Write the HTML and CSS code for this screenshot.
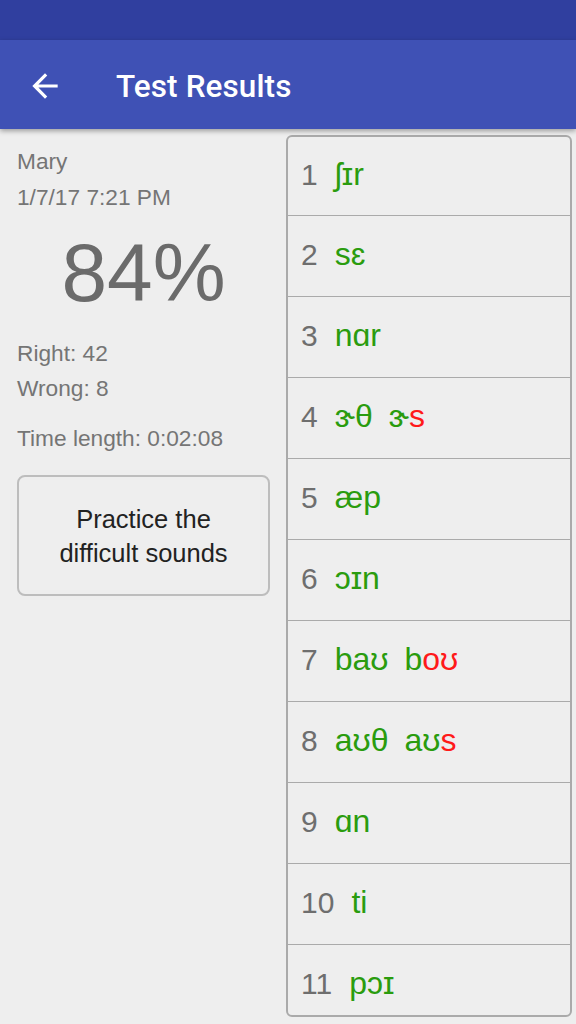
FILE: index.html
```
<!DOCTYPE html>
<html>
<head>
<meta charset="utf-8">
<link rel="stylesheet" href="styles.css">
</head>
<body>
<div class="statusbar"></div>
<header class="toolbar">
  <svg class="back" viewBox="0 0 24 24" width="38" height="38"><path fill="#fff" d="M20 11H7.83l5.59-5.59L12 4l-8 8 8 8 1.41-1.41L7.83 13H20v-2z"/></svg>
  <h1 class="title">Test Results</h1>
</header>
<main class="content">
  <section class="summary">
    <div class="info">Mary</div>
    <div class="info">1/7/17 7:21 PM</div>
    <div class="score">84%</div>
    <div class="stat first">Right: 42</div>
    <div class="stat">Wrong: 8</div>
    <div class="stat time">Time length: 0:02:08</div>
    <button class="practice">Practice the<br>difficult sounds</button>
  </section>
  <section class="list">
    <div class="row"><span class="num">1</span><span class="ipa"><span class="ok">ʃɪr</span></span></div>
    <div class="row"><span class="num">2</span><span class="ipa"><span class="ok">sɛ</span></span></div>
    <div class="row"><span class="num">3</span><span class="ipa"><span class="ok">nɑr</span></span></div>
    <div class="row"><span class="num">4</span><span class="ipa"><span class="ok">ɝθ</span><span><span class="ok">ɝ</span><span class="bad">s</span></span></span></div>
    <div class="row"><span class="num">5</span><span class="ipa"><span class="ok">æp</span></span></div>
    <div class="row"><span class="num">6</span><span class="ipa"><span class="ok">ɔɪn</span></span></div>
    <div class="row"><span class="num">7</span><span class="ipa"><span class="ok">baʊ</span><span><span class="ok">b</span><span class="bad">oʊ</span></span></span></div>
    <div class="row"><span class="num">8</span><span class="ipa"><span class="ok">aʊθ</span><span><span class="ok">aʊ</span><span class="bad">s</span></span></span></div>
    <div class="row"><span class="num">9</span><span class="ipa"><span class="ok">ɑn</span></span></div>
    <div class="row"><span class="num">10</span><span class="ipa"><span class="ok">ti</span></span></div>
    <div class="row"><span class="num">11</span><span class="ipa"><span class="ok">pɔɪ</span></span></div>
  </section>
</main>
</body>
</html>
```
FILE: styles.css
```
* { box-sizing: border-box; }
html, body {
  margin: 0;
  padding: 0;
  background: #eeeeee;
  font-family: "Liberation Sans", Arial, sans-serif;
  width: 576px;
  height: 1024px;
  overflow: hidden;
}
.statusbar {
  height: 40px;
  background: #303f9f;
}
.toolbar {
  position: relative;
  z-index: 2;
  height: 89px;
  background: #3f51b5;
  display: flex;
  align-items: center;
  box-shadow: 0 2px 5px rgba(0, 0, 0, 0.35);
}
.back {
  display: block;
  margin-left: 26px;
  margin-top: 2px;
}
.title {
  margin: 4px 0 0 52px;
  font-family: Roboto, "Liberation Sans", sans-serif;
  font-weight: 500;
  font-size: 31.5px;
  color: #ffffff;
  letter-spacing: 0.1px;
}
.content {
  display: flex;
  align-items: flex-start;
}
.summary {
  width: 286px;
  padding: 14px 16px 0 17px;
  display: flex;
  flex-direction: column;
  color: #757575;
  font-size: 22.7px;
}
.info {
  line-height: 36px;
}
.score {
  margin-top: 13px;
  font-size: 82px;
  line-height: 90px;
  text-align: center;
  color: #6b6b6b;
}
.stat {
  line-height: 35px;
}
.stat.first { margin-top: 18px; }
.stat.time { margin-top: 15px; }
.practice {
  margin-top: 19px;
  width: 253px;
  height: 121px;
  border: 2px solid #bdbdbd;
  border-radius: 8px;
  background: #eeeeee;
  font-family: "Liberation Sans", Arial, sans-serif;
  font-size: 25.5px;
  line-height: 34px;
  color: #222222;
  padding: 0;
}
.list {
  margin-top: 6px;
  width: 286px;
  height: 882px;
  overflow: hidden;
  border: 2px solid #aaaaaa;
  border-radius: 6px;
  display: flex;
  flex-direction: column;
}
.row {
  flex: none;
  height: 81px;
  border-top: 1px solid #aaaaaa;
  display: flex;
  align-items: center;
  padding: 0 0 3px 13px;
  gap: 17px;
}
.row:first-child {
  height: 78px;
  border-top: none;
}
.num {
  font-size: 30px;
  color: #6e6e6e;
}
.ipa {
  display: flex;
  gap: 16px;
  font-size: 32px;
}
.ok { color: #2a9c0e; }
.bad { color: #ff1a1a; }
```
